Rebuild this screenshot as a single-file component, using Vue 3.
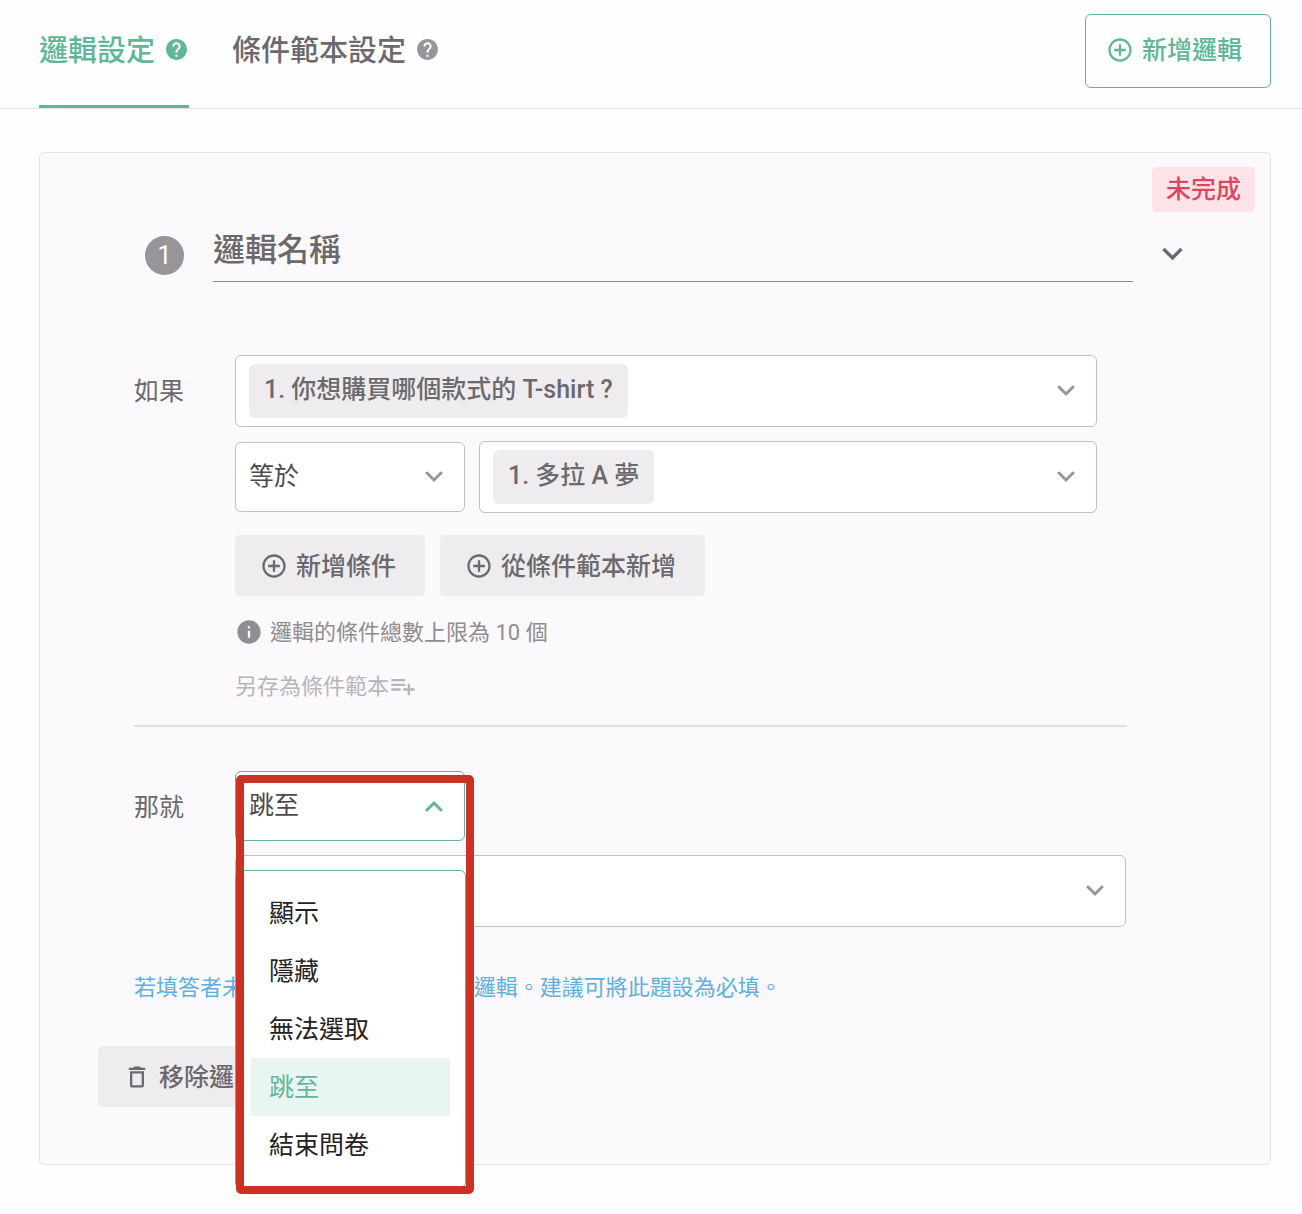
<template>
  <div class="page">
    <header class="topbar">
      <nav class="tabs">
        <button
          v-for="tab in tabs"
          :key="tab"
          type="button"
          class="tab"
          :class="{ active: tab === activeTab }"
          @click="activeTab = tab"
        >
          <span>{{ tab }}</span>
          <svg class="helpIcon" viewBox="0 0 24 24"><path :d="icons.help" /></svg>
        </button>
      </nav>
      <button type="button" class="addLogic">
        <svg class="icon" viewBox="0 0 24 24"><path :d="icons.add" /></svg>
        <span>新增邏輯</span>
      </button>
    </header>

    <main class="card">
      <span class="badge">未完成</span>

      <div class="cardHead">
        <span class="number">1</span>
        <input v-model="logicName" class="nameInput" type="text" placeholder="邏輯名稱" aria-label="邏輯名稱" />
        <button type="button" class="collapse" aria-label="收合">
          <svg viewBox="0 0 24 24"><path :d="icons.expand" /></svg>
        </button>
      </div>

      <section class="rule ifRule">
        <label class="ruleLabel" for="question">如果</label>
        <div class="fields">
          <div class="box tall">
            <select id="question" class="chip">
              <option>1. 你想購買哪個款式的 T-shirt ?</option>
            </select>
            <svg class="chevron" viewBox="0 0 18 12"><path d="M2 2l7 7 7-7" /></svg>
          </div>
          <div class="pair">
            <div class="box short">
              <select class="plain" aria-label="條件">
                <option>等於</option>
              </select>
              <svg class="chevron" viewBox="0 0 18 12"><path d="M2 2l7 7 7-7" /></svg>
            </div>
            <div class="box tall grow">
              <select class="chip" aria-label="選項">
                <option>1. 多拉 A 夢</option>
              </select>
              <svg class="chevron" viewBox="0 0 18 12"><path d="M2 2l7 7 7-7" /></svg>
            </div>
          </div>
          <div class="actions">
            <button type="button" class="greyButton">
              <svg class="icon" viewBox="0 0 24 24"><path :d="icons.add" /></svg>
              <span>新增條件</span>
            </button>
            <button type="button" class="greyButton">
              <svg class="icon" viewBox="0 0 24 24"><path :d="icons.add" /></svg>
              <span>從條件範本新增</span>
            </button>
          </div>
          <p class="limit">
            <svg class="icon" viewBox="0 0 24 24"><path :d="icons.info" /></svg>
            <span>邏輯的條件總數上限為 10 個</span>
          </p>
          <button type="button" class="saveAs" disabled>
            <span>另存為條件範本</span>
            <svg class="icon" viewBox="0 0 24 24"><path :d="icons.playlist" /></svg>
          </button>
        </div>
      </section>

      <hr class="divider" />

      <section class="rule thenRule">
        <label class="ruleLabel" for="action">那就</label>
        <div class="fields">
          <div class="box short open">
            <select id="action" v-model="action" class="plain">
              <option v-for="item in actionList" :key="item">{{ item }}</option>
            </select>
            <svg class="chevron" viewBox="0 0 18 12"><path d="M2 10l7-7 7 7" /></svg>
          </div>
          <div class="box tall">
            <select class="plain" aria-label="目標題目">
              <option value=""></option>
            </select>
            <svg class="chevron" viewBox="0 0 18 12"><path d="M2 2l7 7 7-7" /></svg>
          </div>
          <div class="menu">
            <button
              v-for="item in actionList"
              :key="item"
              type="button"
              class="menuItem"
              :class="{ selected: item === action }"
              @click="action = item"
            >
              {{ item }}
            </button>
          </div>
          <div class="highlight"></div>
        </div>
      </section>

      <p class="hint">若填答者未填答此題, 則不會觸發本邏輯。建議可將此題設為必填。</p>

      <button type="button" class="greyButton remove">
        <svg class="icon" viewBox="0 0 24 24"><path :d="icons.trash" /></svg>
        <span>移除邏輯</span>
      </button>
    </main>
  </div>
</template>

<script setup>
import { ref } from 'vue';

const tabs = ['邏輯設定', '條件範本設定'];
const activeTab = ref('邏輯設定');

const logicName = ref('');

const actionList = ['顯示', '隱藏', '無法選取', '跳至', '結束問卷'];
const action = ref('跳至');

const icons = {
  help: 'M12 2C6.48 2 2 6.48 2 12s4.48 10 10 10 10-4.48 10-10S17.52 2 12 2zm1 17h-2v-2h2v2zm2.07-7.75l-.9.92C13.45 12.9 13 13.5 13 15h-2v-.5c0-1.1.45-2.1 1.17-2.83l1.24-1.26c.37-.36.59-.86.59-1.41 0-1.1-.9-2-2-2s-2 .9-2 2H8c0-2.21 1.79-4 4-4s4 1.79 4 4c0 .88-.36 1.68-.93 2.25z',
  add: 'M13 7h-2v4H7v2h4v4h2v-4h4v-2h-4V7zm-1-5C6.48 2 2 6.48 2 12s4.48 10 10 10 10-4.48 10-10S17.52 2 12 2zm0 18c-4.41 0-8-3.59-8-8s3.59-8 8-8 8 3.59 8 8-3.59 8-8 8z',
  info: 'M12 2C6.48 2 2 6.48 2 12s4.48 10 10 10 10-4.48 10-10S17.52 2 12 2zm1 15h-2v-6h2v6zm0-8h-2V7h2v2z',
  expand: 'M16.59 8.59L12 13.17 7.41 8.59 6 10l6 6 6-6z',
  playlist: 'M14 10H2v2h12v-2zm0-4H2v2h12V6zm4 8v-4h-2v4h-4v2h4v4h2v-4h4v-2h-4zM2 16h8v-2H2v2z',
  trash: 'M6 19c0 1.1.9 2 2 2h8c1.1 0 2-.9 2-2V7H6v12zM8 9h8v10H8V9zm7.5-5l-1-1h-5l-1 1H5v2h14V4h-3.5z'
};
</script>

<style>
body {
  background: #fefefe;
}
</style>

<style scoped>
.page {
  box-sizing: border-box;
  padding-bottom: 48px;
  font-family: Roboto, 'Noto Sans CJK TC', sans-serif;
  font-size: 25px;
  color: #6b696d;
}

.page *,
.page *::before {
  box-sizing: border-box;
}

button,
input,
select {
  margin: 0;
  padding: 0;
  border: 0;
  background: none;
  font: inherit;
  color: inherit;
}

button {
  cursor: pointer;
}

p {
  margin: 0;
}

svg {
  flex: none;
  fill: currentColor;
}

/* lifts the text a little against the icon next to it */
button span,
.limit span {
  padding-bottom: 4px;
}

.icon {
  width: 28px;
  height: 28px;
}

.topbar {
  display: flex;
  justify-content: space-between;
  align-items: flex-start;
  padding: 0 31px 0 39px;
  border-bottom: 1px solid #e3e1e5;
}

.tabs {
  display: flex;
  gap: 43px;
}

.tab {
  display: flex;
  align-items: center;
  gap: 9px;
  height: 108px;
  padding-bottom: 6px;
  border-bottom: 3px solid transparent;
  font-size: 29px;
  font-weight: 500;
}

.tab .helpIcon {
  width: 25px;
  height: 25px;
  color: #979599;
}

.tab.active {
  color: #5fb797;
  border-bottom-color: #5fb797;
}

.tab.active .helpIcon {
  color: #5fb797;
}

.addLogic {
  display: flex;
  align-items: center;
  gap: 8px;
  height: 74px;
  margin-top: 14px;
  padding: 0 28px 2px 20px;
  border: 1px solid #5fb3a0;
  border-radius: 6px;
  color: #5fb797;
  font-weight: 500;
}

.card {
  display: flex;
  flex-direction: column;
  margin: 43px 31px 0 39px;
  padding: 14px 0 57px;
  background: #fbf9fc;
  border: 1px solid #e5e3e8;
  border-radius: 5px;
}

.badge {
  align-self: flex-end;
  height: 45px;
  margin-right: 15px;
  padding: 0 14px;
  border-radius: 5px;
  background: #fbe3e8;
  color: #dc4661;
  line-height: 45px;
  font-weight: 500;
}

.cardHead {
  display: flex;
  align-items: flex-end;
  margin-top: 6px;
  padding: 0 77px 0 105px;
}

.number {
  width: 39px;
  height: 39px;
  margin: 0 29px 7px 0;
  border-radius: 50%;
  background: #979599;
  color: #fff;
  line-height: 39px;
  text-align: center;
}

.nameInput {
  flex: 1;
  min-width: 0;
  height: 64px;
  border-bottom: 1px solid #8c8a8e;
  outline: none;
  font-size: 32px;
  font-weight: 500;
}

.nameInput::placeholder {
  color: #6b696d;
  opacity: 1;
}

.collapse {
  height: 41px;
  margin: 0 0 8px 19px;
}

.collapse svg {
  display: block;
  width: 41px;
  height: 41px;
}

.rule {
  display: flex;
  margin-right: 144px;
  margin-left: 94px;
}

.ifRule {
  margin-top: 73px;
  padding-right: 29px;
}

.thenRule {
  margin-top: 44px;
}

.ruleLabel {
  width: 101px;
  line-height: 73px;
}

.fields {
  position: relative;
  flex: 1;
  min-width: 0;
  display: flex;
  flex-direction: column;
  gap: 14px;
}

.box {
  position: relative;
  display: flex;
  align-items: center;
  padding: 0 13px;
  border: 1px solid #c2bfc5;
  border-radius: 6px;
  background: #fff;
}

.tall {
  height: 72px;
}

.short {
  width: 230px;
  height: 70px;
}

.grow {
  flex: 1;
}

.open {
  border-color: #5fb3a0;
}

select {
  appearance: none;
  outline: none;
}

.plain {
  flex: 1;
  min-width: 0;
  height: 60px;
  padding-bottom: 2px;
  color: #4b494d;
}

.chip {
  field-sizing: content;
  height: 54px;
  padding: 0 15px 4px;
  border-radius: 6px;
  background: #eeecef;
  font-weight: 500;
}

.chevron {
  position: absolute;
  right: 21px;
  width: 18px;
  height: 12px;
  fill: none;
  stroke: #979599;
  stroke-width: 3;
  stroke-linecap: round;
  pointer-events: none;
}

.open .chevron {
  stroke: #5fb797;
}

.pair {
  display: flex;
  align-items: center;
  gap: 14px;
}

.actions {
  display: flex;
  gap: 15px;
  margin-top: 8px;
}

.greyButton {
  display: flex;
  align-items: center;
  gap: 8px;
  height: 61px;
  padding: 0 29px 0 25px;
  border-radius: 5px;
  background: #eeecef;
  font-weight: 500;
}

.limit {
  display: flex;
  align-items: center;
  gap: 7px;
  height: 32px;
  margin-top: 6px;
  font-size: 22px;
  color: #8f8d91;
}

.saveAs {
  align-self: flex-start;
  display: flex;
  align-items: center;
  height: 32px;
  margin-top: 8px;
  font-size: 22px;
  color: #b7b5b9;
}

.divider {
  width: auto;
  height: 2px;
  margin: 23px 143px 0 94px;
  border: 0;
  background: #e2e0e5;
}

.menu {
  position: absolute;
  top: 99px;
  left: 0;
  width: 231px;
  padding: 13px 15px;
  border: 1px solid #5fb3a0;
  border-radius: 6px;
  background: #fff;
}

.menuItem {
  display: block;
  width: 100%;
  height: 58px;
  padding: 0 18px 4px;
  color: #232126;
  text-align: left;
}

.menuItem.selected {
  background: #e8f5f3;
  color: #5fb797;
}

/* red frame round the opened drop-down */
.highlight {
  position: absolute;
  top: 4px;
  left: 1px;
  width: 238px;
  height: 419px;
  border: 8px solid #cb3224;
  border-radius: 5px;
  pointer-events: none;
}

.hint {
  margin: 45px 94px 0;
  font-size: 22px;
  line-height: 32px;
  color: #5eb0e0;
}

.remove {
  align-self: flex-start;
  margin: 42px 0 0 58px;
}
</style>
